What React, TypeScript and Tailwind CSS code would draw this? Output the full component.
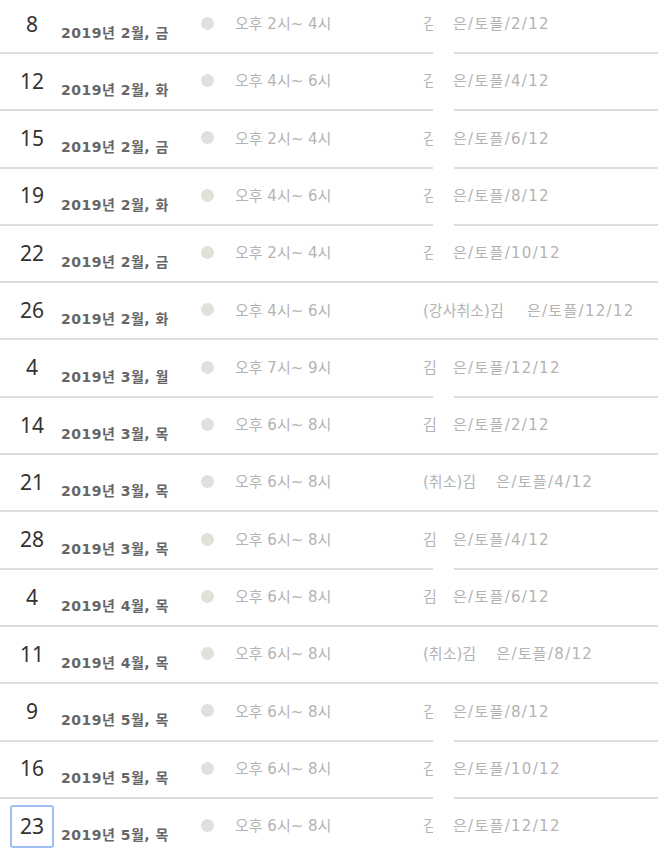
type Session = {
  day: number
  month: number
  weekday: string
  time: string
  prefix: string
  progress: string
  clipName: boolean
  lineGap: boolean
  focused?: boolean
}

const sessions: Session[] = [
  { day: 8, month: 2, weekday: '금', time: '오후 2시~ 4시', prefix: '', progress: '2/12', clipName: true, lineGap: true },
  { day: 12, month: 2, weekday: '화', time: '오후 4시~ 6시', prefix: '', progress: '4/12', clipName: true, lineGap: true },
  { day: 15, month: 2, weekday: '금', time: '오후 2시~ 4시', prefix: '', progress: '6/12', clipName: true, lineGap: true },
  { day: 19, month: 2, weekday: '화', time: '오후 4시~ 6시', prefix: '', progress: '8/12', clipName: true, lineGap: true },
  { day: 22, month: 2, weekday: '금', time: '오후 2시~ 4시', prefix: '', progress: '10/12', clipName: true, lineGap: false },
  { day: 26, month: 2, weekday: '화', time: '오후 4시~ 6시', prefix: '(강사취소)', progress: '12/12', clipName: false, lineGap: false },
  { day: 4, month: 3, weekday: '월', time: '오후 7시~ 9시', prefix: '', progress: '12/12', clipName: false, lineGap: true },
  { day: 14, month: 3, weekday: '목', time: '오후 6시~ 8시', prefix: '', progress: '2/12', clipName: false, lineGap: false },
  { day: 21, month: 3, weekday: '목', time: '오후 6시~ 8시', prefix: '(취소)', progress: '4/12', clipName: false, lineGap: false },
  { day: 28, month: 3, weekday: '목', time: '오후 6시~ 8시', prefix: '', progress: '4/12', clipName: false, lineGap: true },
  { day: 4, month: 4, weekday: '목', time: '오후 6시~ 8시', prefix: '', progress: '6/12', clipName: false, lineGap: false },
  { day: 11, month: 4, weekday: '목', time: '오후 6시~ 8시', prefix: '(취소)', progress: '8/12', clipName: false, lineGap: false },
  { day: 9, month: 5, weekday: '목', time: '오후 6시~ 8시', prefix: '', progress: '8/12', clipName: true, lineGap: true },
  { day: 16, month: 5, weekday: '목', time: '오후 6시~ 8시', prefix: '', progress: '10/12', clipName: true, lineGap: true },
  { day: 23, month: 5, weekday: '목', time: '오후 6시~ 8시', prefix: '', progress: '12/12', clipName: true, lineGap: false, focused: true },
]

// wide latin digits next to the korean glyphs, like the original page
const bodyFont = '"DejaVu Sans", "Noto Sans CJK KR", sans-serif'

function spacerClass(s: Session) {
  if (s.prefix === '(강사취소)') return 'w-[23px]'
  if (s.prefix) return 'w-[20px]'
  return s.clipName ? 'w-[20px]' : 'w-[16px]'
}

function SessionRow({ s }: { s: Session }) {
  return (
    <div className="relative flex items-center h-[57.3px] border-b-2 border-[#dddde1]">
      {/* day number */}
      <div
        className={`ml-[10px] w-[44px] h-[43px] flex items-center justify-center rounded-[3px] border-2 text-[21px] text-[#333] ${
          s.focused ? 'border-[#9fbff3]' : 'border-transparent'
        }`}
      >
        {s.day}
      </div>

      {/* date */}
      <div
        className="ml-[7px] w-[140px] mt-[18px] text-[14px] font-bold tracking-[0.5px] text-[#666] whitespace-nowrap"
        style={{ fontFamily: bodyFont }}
      >
        2019년 {s.month}월, {s.weekday}
      </div>

      {/* status dot */}
      <span className="w-[13px] h-[13px] rounded-full bg-[#e3e0dc] shrink-0 mb-[2px]" />

      {/* time */}
      <div
        className="ml-[21px] w-[188px] text-[15px] text-[#b3b3b3] whitespace-nowrap"
        style={{ fontFamily: bodyFont }}
      >
        {s.time}
      </div>

      {/* instructor / course */}
      <div
        className="flex items-center text-[15px] text-[#b3b3b3] whitespace-nowrap"
        style={{ fontFamily: bodyFont }}
      >
        {s.prefix && <span>{s.prefix}</span>}
        <span className={`inline-block overflow-hidden ${s.clipName ? 'w-[10px]' : 'w-[14px]'}`}>김</span>
        <span className={spacerClass(s)} />
        <span className="tracking-[1.3px]">은/토플/{s.progress}</span>
      </div>

      {/* masked part of the divider */}
      {s.lineGap && <span className="absolute left-[433px] bottom-[-2px] w-[21px] h-[2px] bg-white" />}
    </div>
  )
}

export default function App() {
  return (
    <div
      className="w-[658px] h-[852px] overflow-hidden bg-white"
      style={{ fontFamily: '"Noto Sans", "Noto Sans CJK KR", sans-serif' }}
    >
      <div className="mt-[-3.3px]">
        {sessions.map((s, i) => (
          <SessionRow key={i} s={s} />
        ))}
      </div>
    </div>
  )
}
